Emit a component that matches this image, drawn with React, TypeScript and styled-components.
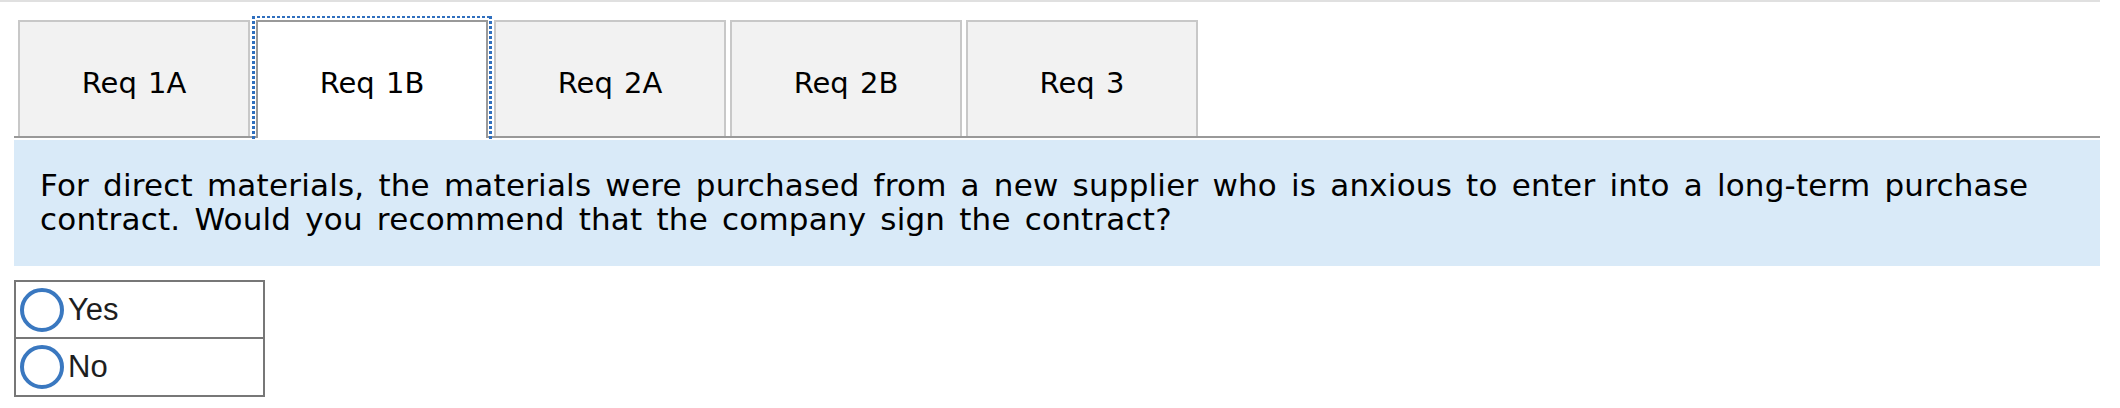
import React from "react";
import styled, { createGlobalStyle } from "styled-components";

const GlobalStyle = createGlobalStyle`
  html, body { margin: 0; padding: 0; background: #ffffff; }
  * { box-sizing: border-box; }
`;

const Page = styled.div`
  width: 2100px;
  border-top: 2px solid #e0e0e0;
`;

const Content = styled.div`
  padding-left: 14px;
`;

const TabList = styled.div`
  display: flex;
  align-items: flex-end;
  gap: 4px;
  padding: 18px 0 0 4px;
  border-bottom: 2px solid #999999;
`;

const Tab = styled.div<{ $active?: boolean }>`
  position: relative;
  width: 232px;
  height: ${(p) => (p.$active ? "118px" : "116px")};
  margin: ${(p) => (p.$active ? "0 2px -2px 2px" : "0")};
  display: flex;
  align-items: center;
  justify-content: center;
  padding-top: ${(p) => (p.$active ? "6px" : "8px")};
  background: ${(p) => (p.$active ? "#ffffff" : "#f2f2f2")};
  border: 2px solid ${(p) => (p.$active ? "#999999" : "#c8c8c8")};
  border-bottom: none;
  font-family: "DejaVu Sans", Verdana, sans-serif;
  font-size: 29px;
  word-spacing: 2px;
  color: #000000;
  cursor: pointer;

  &::before {
    content: "";
    display: ${(p) => (p.$active ? "block" : "none")};
    position: absolute;
    top: -6px;
    left: -6px;
    right: -6px;
    bottom: -2px;
    pointer-events: none;
    background:
      repeating-linear-gradient(90deg, #2f6fbe 0 3px, transparent 3px 5px) left top / 100% 2px no-repeat,
      repeating-linear-gradient(180deg, #2f6fbe 0 3px, transparent 3px 5px) left top / 3px 100% no-repeat,
      repeating-linear-gradient(180deg, #2f6fbe 0 3px, transparent 3px 5px) right top / 3px 100% no-repeat;
  }
`;

const Question = styled.div`
  margin-top: 2px;
  background: #d9eaf8;
  padding: 28px 20px 30px 26px;
  font-family: "DejaVu Sans", Verdana, sans-serif;
  font-size: 31px;
  line-height: 34px;
  word-spacing: 4px;
  letter-spacing: 0.2px;
  color: #000000;
`;

const Options = styled.div`
  margin-top: 14px;
  width: 251px;
  border: 2px solid #777777;
`;

const OptionRow = styled.label`
  display: flex;
  align-items: center;
  gap: 4px;
  height: 57px;
  padding-left: 4px;
  border-bottom: 2px solid #777777;
  font-family: "Liberation Sans", Arial, sans-serif;
  font-size: 31px;
  color: #1e1e1e;
  cursor: pointer;

  &:last-child {
    border-bottom: none;
    height: 56px;
  }
`;

const Radio = styled.span`
  width: 44px;
  height: 44px;
  border-radius: 50%;
  border: 4px solid #3a78c0;
  background: #ffffff;
  flex-shrink: 0;
`;

const tabs = ["Req 1A", "Req 1B", "Req 2A", "Req 2B", "Req 3"];

export default function App() {
  return (
    <>
      <GlobalStyle />
      <Page>
        <Content>
          <TabList>
            {tabs.map((t) => (
              <Tab key={t} $active={t === "Req 1B"}>
                {t}
              </Tab>
            ))}
          </TabList>
          <Question>
            For direct materials, the materials were purchased from a new supplier who is anxious to enter into a long-term purchase contract. Would you recommend that the company sign the contract?
          </Question>
          <Options>
            <OptionRow>
              <Radio />
              Yes
            </OptionRow>
            <OptionRow>
              <Radio />
              No
            </OptionRow>
          </Options>
        </Content>
      </Page>
    </>
  );
}
